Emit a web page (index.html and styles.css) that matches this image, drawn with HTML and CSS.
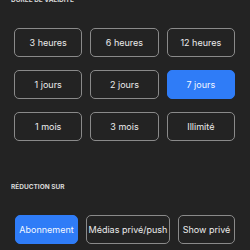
FILE: index.html
```html
<!DOCTYPE html>
<html lang="fr">
<head>
<meta charset="utf-8">
<link rel="stylesheet" href="styles.css">
</head>
<body>
<div class="page">
  <div class="label label-top">DURÉE DE VALIDITÉ</div>
  <div class="grid">
    <button class="opt">3 heures</button>
    <button class="opt">6 heures</button>
    <button class="opt">12 heures</button>
    <button class="opt">1 jours</button>
    <button class="opt">2 jours</button>
    <button class="opt active">7 jours</button>
    <button class="opt">1 mois</button>
    <button class="opt">3 mois</button>
    <button class="opt">Illimité</button>
  </div>
  <div class="label label-second">RÉDUCTION SUR</div>
  <div class="row">
    <button class="opt active">Abonnement</button>
    <button class="opt">Médias privé/push</button>
    <button class="opt">Show privé</button>
  </div>
</div>
</body>
</html>
```

FILE: styles.css
```css
html, body {
  margin: 0;
  padding: 0;
  background: #232323;
  width: 250px;
  height: 250px;
  overflow: hidden;
}
.page {
  font-family: Inter, "Noto Sans", sans-serif;
  color: #ececec;
}
.label {
  font-size: 6.5px;
  font-weight: 700;
  color: #d8d8d8;
  line-height: 10px;
  padding-left: 11px;
}
.label-top {
  margin-top: -5px;
}
.grid {
  display: grid;
  grid-template-columns: repeat(3, 1fr);
  grid-auto-rows: 29px;
  gap: 13px 8px;
  margin: 23px 15px 0 14px;
}
.label-second {
  margin-top: 41px;
}
.row {
  display: grid;
  grid-template-columns: 63px 84px 57px;
  grid-auto-rows: 29px;
  gap: 8px;
  margin: 23px 0 0 15px;
}
.opt {
  font-family: inherit;
  font-size: 9px;
  color: #ececec;
  background: transparent;
  border: 1px solid #8a8a8a;
  border-radius: 5px;
  padding: 0;
  margin: 0;
  white-space: nowrap;
}
.opt.active {
  background: #2f7cf7;
  border-color: #2f7cf7;
  color: #f4f8ff;
}
```
